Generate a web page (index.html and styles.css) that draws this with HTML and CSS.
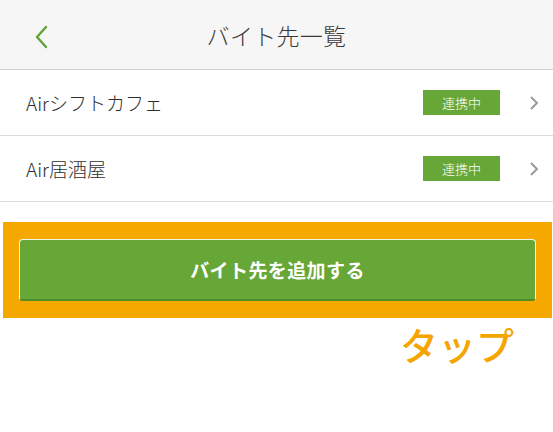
FILE: index.html
```html
<!DOCTYPE html>
<html lang="ja">
<head>
<meta charset="utf-8">
<link rel="stylesheet" href="styles.css">
</head>
<body>
<header class="header">
  <span class="back">
    <svg width="14" height="24" viewBox="0 0 14 24"><path d="M12 2 L3 12 L12 22" fill="none" stroke="#5fa33a" stroke-width="2.4" stroke-linecap="round" stroke-linejoin="round"/></svg>
  </span>
  <h1 class="title">バイト先一覧</h1>
</header>
<ul class="list">
  <li class="row">
    <span class="name">Airシフトカフェ</span>
    <span class="badge">連携中</span>
    <svg class="chev" width="10" height="16" viewBox="0 0 10 16"><path d="M2 2 L8 8 L2 14" fill="none" stroke="#9a9a9a" stroke-width="2"/></svg>
  </li>
  <li class="row">
    <span class="name">Air居酒屋</span>
    <span class="badge">連携中</span>
    <svg class="chev" width="10" height="16" viewBox="0 0 10 16"><path d="M2 2 L8 8 L2 14" fill="none" stroke="#9a9a9a" stroke-width="2"/></svg>
  </li>
</ul>
<div class="highlight">
  <button class="add">バイト先を追加する</button>
</div>
<div class="tap">タップ</div>
</body>
</html>
```
FILE: styles.css
```css
* { box-sizing: border-box; }
body {
  margin: 0;
  width: 553px;
  height: 432px;
  background: #fff;
  font-family: "Noto Sans CJK JP", "Noto Sans", sans-serif;
  color: #333;
  overflow: hidden;
}
.header {
  height: 70px;
  background: #f6f6f6;
  border-bottom: 1px solid #d4d4d4;
  display: flex;
  align-items: center;
  justify-content: center;
  position: relative;
}
.back {
  position: absolute;
  left: 34px;
  top: 25px;
  display: flex;
}
.title {
  margin: 0;
  font-size: 23px;
  font-weight: 300;
  color: #3a3a3a;
  letter-spacing: 0.3px;
}
.list {
  list-style: none;
  margin: 0;
  padding: 0;
}
.row {
  height: 66px;
  border-bottom: 1px solid #dcdcdc;
  display: flex;
  align-items: center;
  padding: 0 14px 0 26px;
}
.name {
  flex: 1;
  font-size: 19px;
  font-weight: 300;
  color: #2e2e2e;
}
.badge {
  width: 77px;
  height: 25px;
  background: #67a737;
  color: #fff;
  font-size: 13px;
  font-weight: 300;
  display: flex;
  align-items: center;
  justify-content: center;
  margin-right: 29px;
}
.chev { display: block; }
.highlight {
  margin: 20px 1px 0 3px;
  background: #f5a900;
  padding: 17px 16px;
}
.add {
  display: block;
  width: 100%;
  height: 62px;
  border: 1px solid #f3f7ea;
  border-bottom: 2px solid #4f8c2a;
  border-radius: 4px;
  background: #67a737;
  color: #fff;
  font-family: "Noto Sans CJK JP", sans-serif;
  font-size: 19px;
  font-weight: 700;
  letter-spacing: 0.4px;
  padding: 0;
}
.tap {
  text-align: right;
  padding-right: 39px;
  font-size: 38px;
  line-height: 52px;
  font-weight: 500;
  color: #f5a500;
}
```
